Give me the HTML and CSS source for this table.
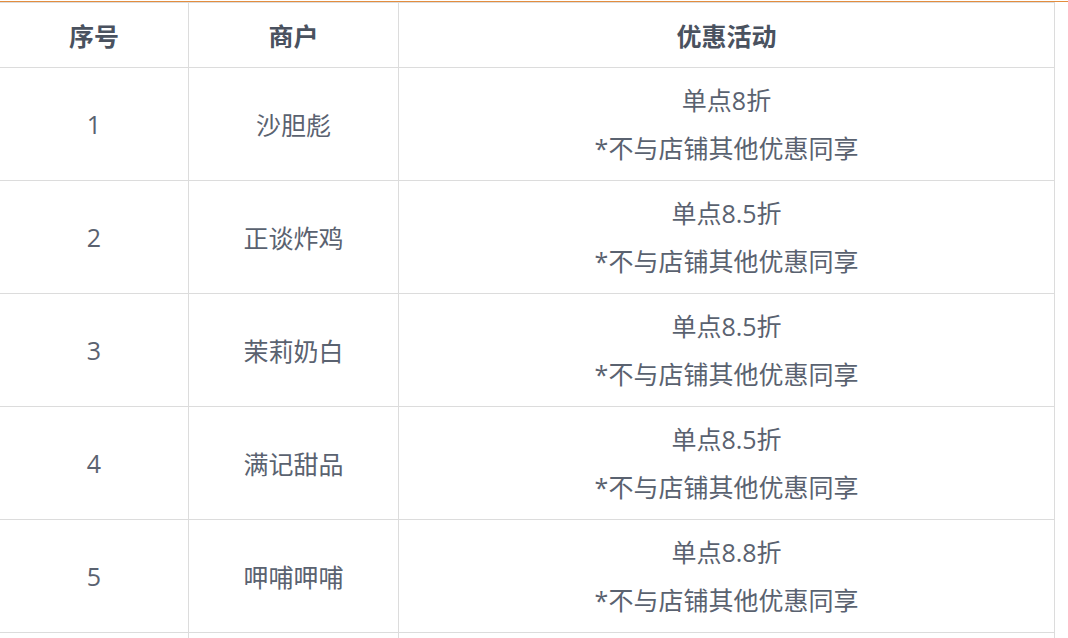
FILE: index.html
```html
<!DOCTYPE html>
<html lang="zh">
<head>
<meta charset="utf-8">
<link rel="stylesheet" href="styles.css">
</head>
<body>
<div class="page">
  <table class="deals">
    <colgroup>
      <col class="c-no">
      <col class="c-shop">
      <col class="c-deal">
    </colgroup>
    <thead>
      <tr><th>序号</th><th>商户</th><th>优惠活动</th></tr>
    </thead>
    <tbody>
      <tr><td>1</td><td>沙胆彪</td><td><div class="line">单点8折</div><div class="line">*不与店铺其他优惠同享</div></td></tr>
      <tr><td>2</td><td>正谈炸鸡</td><td><div class="line">单点8.5折</div><div class="line">*不与店铺其他优惠同享</div></td></tr>
      <tr><td>3</td><td>茉莉奶白</td><td><div class="line">单点8.5折</div><div class="line">*不与店铺其他优惠同享</div></td></tr>
      <tr><td>4</td><td>满记甜品</td><td><div class="line">单点8.5折</div><div class="line">*不与店铺其他优惠同享</div></td></tr>
      <tr><td>5</td><td>呷哺呷哺</td><td><div class="line">单点8.8折</div><div class="line">*不与店铺其他优惠同享</div></td></tr>
      <tr class="next"><td></td><td></td><td></td></tr>
    </tbody>
  </table>
</div>
</body>
</html>
```

FILE: styles.css
```css
html, body {
  margin: 0;
  padding: 0;
  background: #ffffff;
  overflow: hidden;
}

.page {
  margin-top: 1px;
  border-top: 1px solid #e38d3e;
  font-family: "Open Sans", "Noto Sans CJK SC", sans-serif;
}

.deals {
  border-collapse: collapse;
  table-layout: fixed;
  width: 1055px;
  margin-left: -1px;
}

.c-no { width: 189px; }
.c-shop { width: 210px; }
.c-deal { width: 656px; }

.deals th,
.deals td {
  border: 1px solid #dcdcdc;
  text-align: center;
  vertical-align: middle;
  padding: 0;
}

.deals th {
  height: 64px;
  font-size: 25px;
  font-weight: 700;
  color: #4a525f;
}

.deals td {
  height: 112px;
  font-size: 25px;
  color: #5a6270;
}

.line {
  line-height: 48px;
}
```
